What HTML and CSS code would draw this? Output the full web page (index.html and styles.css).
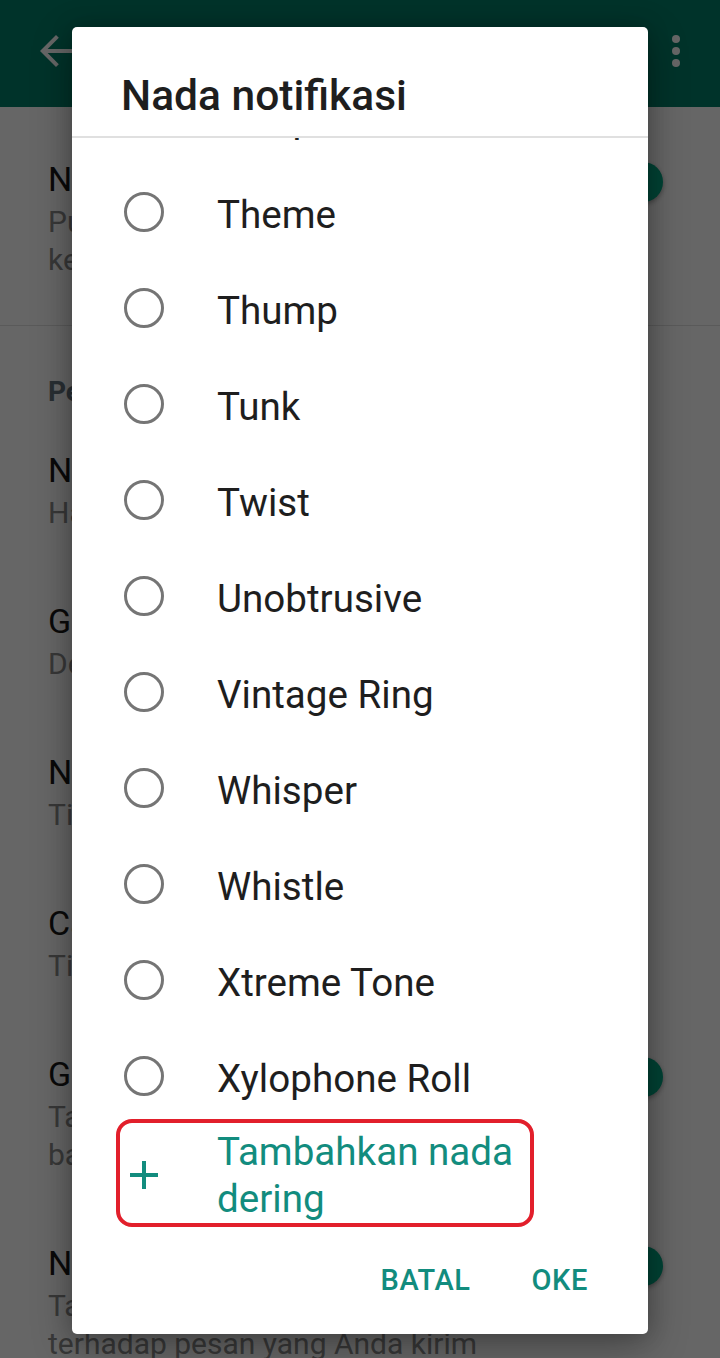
FILE: index.html
```html
<!DOCTYPE html>
<html lang="id">
<head>
<meta charset="utf-8">
<title>Notifikasi</title>
<link rel="stylesheet" href="styles.css">
</head>
<body>
<div class="screen">
  <header class="appbar">
    <svg class="appbar-icon back" viewBox="0 0 24 24" aria-hidden="true"><path d="M20 11H7.83l5.59-5.59L12 4l-8 8 8 8 1.41-1.41L7.83 13H20v-2z"/></svg>
    <h1 class="appbar-title">Notifikasi</h1>
    <svg class="appbar-icon menu" viewBox="0 0 24 24" aria-hidden="true"><circle cx="12" cy="6" r="2"/><circle cx="12" cy="12" r="2"/><circle cx="12" cy="18" r="2"/></svg>
  </header>

  <main class="settings">
    <div class="setting">
      <div class="setting-text">
        <div class="setting-title">Nada percakapan</div>
        <div class="setting-sub">Putar suara untuk pesan masuk dan<br>keluar.</div>
      </div>
      <div class="switch"><span class="switch-track"></span><span class="switch-thumb"></span></div>
    </div>
    <hr class="settings-divider">
    <div class="section-header">Pesan</div>
    <div class="setting">
      <div class="setting-text">
        <div class="setting-title">Nada notifikasi</div>
        <div class="setting-sub">Harmoni</div>
      </div>
    </div>
    <div class="setting">
      <div class="setting-text">
        <div class="setting-title">Getar</div>
        <div class="setting-sub">Default</div>
      </div>
    </div>
    <div class="setting">
      <div class="setting-text">
        <div class="setting-title">Notifikasi pop-up</div>
        <div class="setting-sub">Tidak ada pop-up</div>
      </div>
    </div>
    <div class="setting">
      <div class="setting-text">
        <div class="setting-title">Cahaya</div>
        <div class="setting-sub">Tidak ada</div>
      </div>
    </div>
    <div class="setting">
      <div class="setting-text">
        <div class="setting-title">Gunakan notifikasi prioritas tinggi</div>
        <div class="setting-sub">Tampilkan pratinjau notifikasi di<br>bagian atas layar</div>
      </div>
      <div class="switch"><span class="switch-track"></span><span class="switch-thumb"></span></div>
    </div>
    <div class="setting">
      <div class="setting-text">
        <div class="setting-title">Notifikasi reaksi</div>
        <div class="setting-sub">Tampilkan notifikasi untuk reaksi<br>terhadap pesan yang Anda kirim</div>
      </div>
      <div class="switch"><span class="switch-track"></span><span class="switch-thumb"></span></div>
    </div>
  </main>

  <div class="scrim"></div>

  <div class="dialog" role="dialog" aria-label="Nada notifikasi">
    <h2 class="dialog-title">Nada notifikasi</h2>
    <ul class="tone-list">
      <li class="tone"><span class="radio"></span><span class="tone-name">Tempo</span></li>
      <li class="tone"><span class="radio"></span><span class="tone-name">Theme</span></li>
      <li class="tone"><span class="radio"></span><span class="tone-name">Thump</span></li>
      <li class="tone"><span class="radio"></span><span class="tone-name">Tunk</span></li>
      <li class="tone"><span class="radio"></span><span class="tone-name">Twist</span></li>
      <li class="tone"><span class="radio"></span><span class="tone-name">Unobtrusive</span></li>
      <li class="tone"><span class="radio"></span><span class="tone-name">Vintage Ring</span></li>
      <li class="tone"><span class="radio"></span><span class="tone-name">Whisper</span></li>
      <li class="tone"><span class="radio"></span><span class="tone-name">Whistle</span></li>
      <li class="tone"><span class="radio"></span><span class="tone-name">Xtreme Tone</span></li>
      <li class="tone"><span class="radio"></span><span class="tone-name">Xylophone Roll</span></li>
      <li class="add-tone">
        <svg class="add-icon" viewBox="0 0 28 28" aria-hidden="true"><path d="M14 0v28M0 14h28"/></svg>
        <span class="add-label">Tambahkan nada dering</span>
      </li>
    </ul>
    <div class="dialog-actions">
      <button class="action" type="button">BATAL</button>
      <button class="action" type="button">OKE</button>
    </div>
  </div>
</div>
</body>
</html>
```

FILE: styles.css
```css
* { box-sizing: border-box; }

html, body {
  margin: 0;
  padding: 0;
}

body {
  font-family: Roboto, "Noto Sans", "Liberation Sans", sans-serif;
  background: #fff;
}

.screen {
  position: relative;
  width: 720px;
  height: 1358px;
  overflow: hidden;
  background: #fff;
}

/* ---------- app bar ---------- */
.appbar {
  display: flex;
  align-items: flex-start;
  height: 107px;
  padding: 27px 20px 0 32px;
  background: #008069;
  color: #fff;
}

.appbar-icon {
  width: 48px;
  height: 48px;
  flex: none;
  fill: #fff;
}

.appbar-title {
  flex: 1;
  margin: 0 0 0 40px;
  font-size: 38px;
  line-height: 48px;
  font-weight: 500;
}

/* ---------- settings list ---------- */
.settings {
  padding-top: 15px;
}

.setting {
  display: flex;
  padding: 33px 57px 32px 48px;
}

.setting-text {
  flex: 1;
  min-width: 0;
}

.setting-title {
  font-size: 34px;
  line-height: 48px;
  color: #1a1a1a;
  white-space: nowrap;
}

.setting-sub {
  font-size: 30px;
  line-height: 38px;
  color: #8c8c8c;
  white-space: nowrap;
}

.switch {
  position: relative;
  flex: none;
  width: 72px;
  height: 40px;
  margin-top: 7px;
}

.switch-track {
  position: absolute;
  left: 4px;
  right: 6px;
  top: 6px;
  height: 28px;
  border-radius: 14px;
  background: #80d3c1;
}

.switch-thumb {
  position: absolute;
  right: 0;
  top: 0;
  width: 40px;
  height: 40px;
  border-radius: 50%;
  background: #00a884;
  box-shadow: 0 2px 5px rgba(0, 0, 0, 0.35);
}

.settings-divider {
  margin: 14px 0 0;
  height: 0;
  border: 0;
  border-top: 1px solid #e0e0e0;
}

.section-header {
  padding: 48px 48px 3px;
  font-size: 28px;
  line-height: 36px;
  font-weight: 700;
  color: #667781;
}

/* ---------- scrim ---------- */
.scrim {
  position: absolute;
  inset: 0;
  background: rgba(0, 0, 0, 0.6);
}

/* ---------- dialog ---------- */
.dialog {
  position: absolute;
  left: 72px;
  top: 27px;
  width: 576px;
  height: 1307px;
  display: flex;
  flex-direction: column;
  overflow: hidden;
  background: #fff;
  border-radius: 5px;
  box-shadow: 0 12px 40px rgba(0, 0, 0, 0.3), 0 0 22px rgba(0, 0, 0, 0.18);
}

.dialog-title {
  margin: 0;
  padding: 44px 0 16px 49px;
  font-size: 42.5px;
  line-height: 49px;
  font-weight: 500;
  color: #1e1e1e;
  border-bottom: 2px solid #e0e0e0;
}

.tone-list {
  flex: 1;
  min-height: 0;
  margin: 0;
  padding: 0;
  list-style: none;
  overflow: hidden;
}

.tone {
  display: flex;
  align-items: center;
  height: 96px;
  padding-left: 52px;
}

.tone:first-child {
  margin-top: -70px;
}

.radio {
  flex: none;
  width: 40px;
  height: 40px;
  border: 3.5px solid #757575;
  border-radius: 50%;
}

.tone-name {
  margin-left: 53px;
  padding-top: 4px;
  font-size: 38.6px;
  color: #1e1e1e;
}

.add-tone {
  display: flex;
  align-items: center;
  width: 418px;
  margin: -5px 0 0 44px;
  padding: 5px 0 1px 10px;
  border: 4px solid #e21f2b;
  border-radius: 16px;
  color: #128c7e;
}

.add-icon {
  flex: none;
  width: 28px;
  height: 28px;
  stroke: currentColor;
  stroke-width: 4;
  fill: none;
}

.add-label {
  margin-left: 59px;
  font-size: 38.6px;
  line-height: 47px;
}

.dialog-actions {
  display: flex;
  justify-content: flex-end;
  gap: 61px;
  padding: 30px 60px 37px 0;
}

.action {
  padding: 0;
  border: 0;
  background: none;
  font-family: inherit;
  font-size: 29px;
  line-height: 34px;
  font-weight: 500;
  letter-spacing: 0.6px;
  color: #128c7e;
}
```
